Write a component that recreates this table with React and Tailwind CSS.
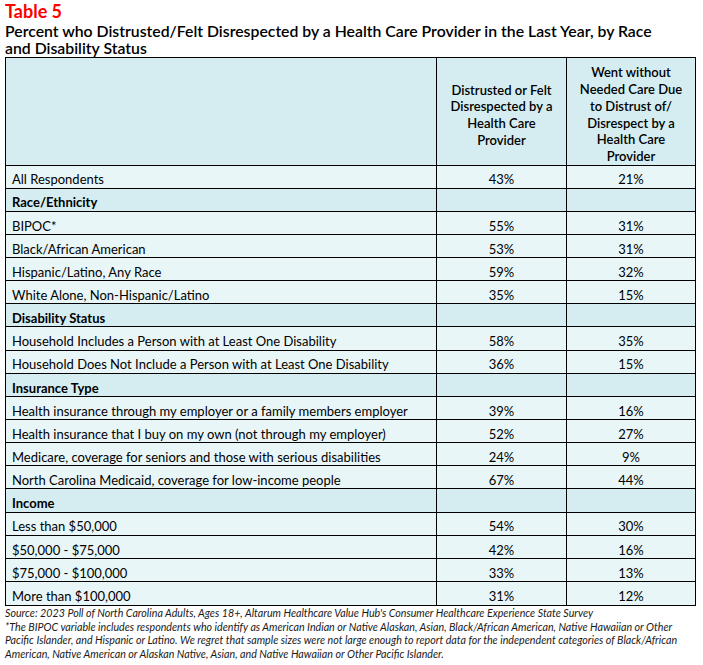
import React from "react";

const rows = [
  { label: "All Respondents", a: "43%", b: "21%" },
  { label: "Race/Ethnicity", section: true },
  { label: "BIPOC*", a: "55%", b: "31%" },
  { label: "Black/African American", a: "53%", b: "31%" },
  { label: "Hispanic/Latino, Any Race", a: "59%", b: "32%" },
  { label: "White Alone, Non-Hispanic/Latino", a: "35%", b: "15%" },
  { label: "Disability Status", section: true },
  { label: "Household Includes a Person with at Least One Disability", a: "58%", b: "35%" },
  { label: "Household Does Not Include a Person with at Least One Disability", a: "36%", b: "15%" },
  { label: "Insurance Type", section: true },
  { label: "Health insurance through my employer or a family members employer", a: "39%", b: "16%" },
  { label: "Health insurance that I buy on my own (not through my employer)", a: "52%", b: "27%" },
  { label: "Medicare, coverage for seniors and those with serious disabilities", a: "24%", b: "9%" },
  { label: "North Carolina Medicaid, coverage for low-income people", a: "67%", b: "44%" },
  { label: "Income", section: true },
  { label: "Less than $50,000", a: "54%", b: "30%" },
  { label: "$50,000 - $75,000", a: "42%", b: "16%" },
  { label: "$75,000 - $100,000", a: "33%", b: "13%" },
  { label: "More than $100,000", a: "31%", b: "12%" },
];

export default function App() {
  return (
    <div
      className="w-[703px] h-[665px] bg-white text-black overflow-hidden"
      style={{ fontFamily: "Lato, 'Noto Sans', sans-serif" }}
    >
      <div className="pl-[5px] pt-[2px]">
        <div className="text-[18px] leading-[19.5px] font-bold text-[#ff0000]">Table 5</div>
        <div className="text-[15.8px] leading-[17.5px] font-semibold w-[690px]">
          Percent who Distrusted/Felt Disrespected by a Health Care Provider in the Last Year, by Race
          <br />
          and Disability Status
        </div>
      </div>
      <div className="ml-[5px] w-[691px] border border-black text-[13px]">
        <div className="flex h-[108px] bg-[#d5edf1] border-b border-black font-semibold leading-[16.7px]">
          <div className="w-[431px] border-r border-black" />
          <div className="w-[130px] border-r border-black flex items-center justify-center text-center pt-[8px]">
            Distrusted or Felt
            <br />
            Disrespected by a
            <br />
            Health Care
            <br />
            Provider
          </div>
          <div className="flex-1 flex items-center justify-center text-center pt-[7px]">
            Went without
            <br />
            Needed Care Due
            <br />
            to Distrust of/
            <br />
            Disrespect by a
            <br />
            Health Care
            <br />
            Provider
          </div>
        </div>
        {rows.map((r, i) => (
          <div
            key={i}
            className={
              "flex h-[23.15px] " +
              (i < rows.length - 1 ? "border-b border-black " : "") +
              (r.section ? "bg-[#d5edf1] font-bold" : "bg-[#e9f6f8]")
            }
          >
            <div className="w-[431px] border-r border-black pl-[6px] flex items-center pt-[7px]">
              {r.label}
            </div>
            <div className="w-[130px] border-r border-black flex items-center justify-center pt-[7px]">
              {r.a}
            </div>
            <div className="flex-1 flex items-center justify-center pt-[7px]">{r.b}</div>
          </div>
        ))}
      </div>
      <div className="pl-[5px] text-[10.7px] leading-[13.5px] italic text-[#1a1a1a]">
        <div>
          Source: 2023 Poll of North Carolina Adults, Ages 18+, Altarum Healthcare Value Hub's Consumer Healthcare Experience State Survey
        </div>
        <div className="w-[688px]">
          *The BIPOC variable includes respondents who identify as American Indian or Native Alaskan, Asian, Black/African American, Native Hawaiian or Other Pacific Islander, and Hispanic or Latino. We regret that sample sizes were not large enough to report data for the independent categories of Black/African American, Native American or Alaskan Native, Asian, and Native Hawaiian or Other Pacific Islander.
        </div>
      </div>
    </div>
  );
}
